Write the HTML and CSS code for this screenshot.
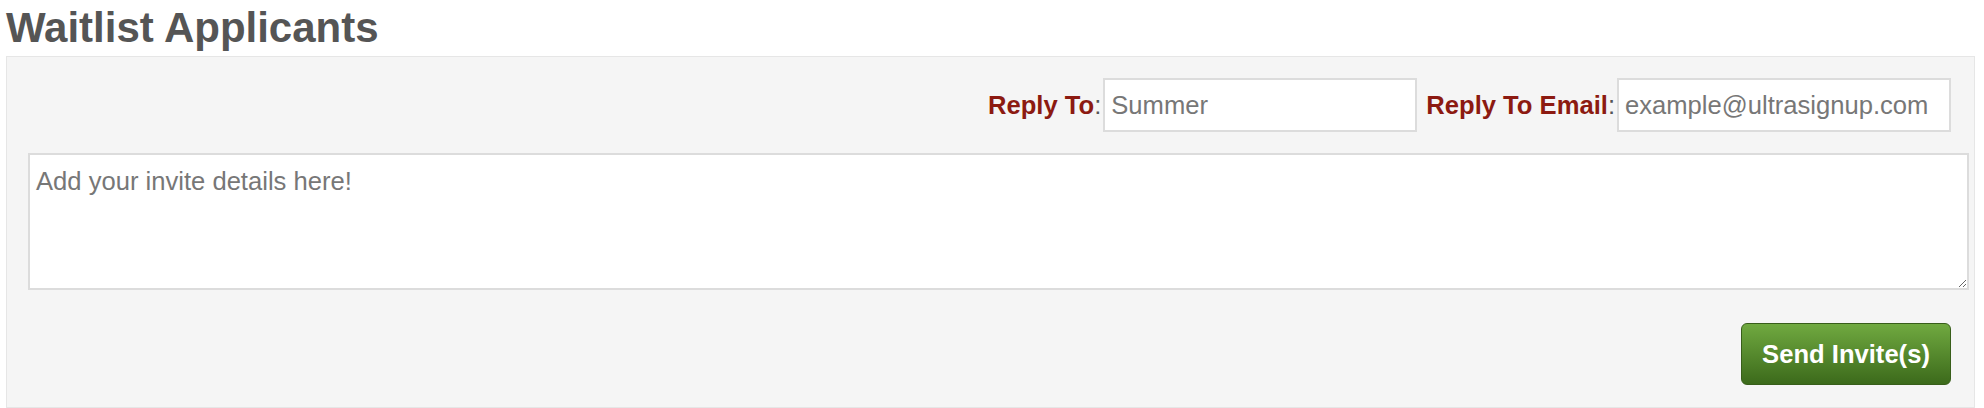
FILE: index.html
```html
<!DOCTYPE html>
<html lang="en">
<head>
    <meta charset="UTF-8">
    <meta name="viewport" content="width=device-width, initial-scale=1.0">
    <title>Waitlist Applicants</title>
    <link rel="stylesheet" href="styles.css">
</head>
<body>
    <h1 class="page-title">Waitlist Applicants</h1>
    <div class="invite-panel">
        <form id="inviteForm" class="invite-form">
            <div class="reply-row">
                <label for="reply_to"><strong>Reply To</strong>:</label>
                <input type="text" id="reply_to" name="reply_to" class="reply-name" placeholder="Summer">

                <label for="reply_email" class="email-label"><strong>Reply To Email</strong>:</label>
                <input type="email" id="reply_email" name="reply_email" class="reply-email" placeholder="example@ultrasignup.com">
            </div>

            <textarea id="invite_details" name="invite_details" class="invite-details" placeholder="Add your invite details here!"></textarea>

            <div class="actions">
                <button type="submit" class="send-button">Send Invite(s)</button>
            </div>
        </form>
    </div>
</body>
</html>
```

FILE: styles.css
```css
body {
    font-family: "Liberation Sans", Arial, Helvetica, sans-serif;
    margin: 0;
    padding: 4px 9px 0 6px;
    color: #555;
    background: #fff;
}
.page-title {
    margin: 0 0 5px 0;
    font-size: 42px;
    line-height: 47px;
    font-weight: bold;
    color: #555;
}
.invite-panel {
    background: #f5f5f5;
    border: 1px solid #e6e6e6;
    padding: 21px 23px 22px 21px;
}
.invite-form {
    display: flex;
    flex-direction: column;
}
.reply-row {
    display: flex;
    justify-content: flex-end;
    align-items: center;
}
.reply-row label {
    font-size: 25.6px;
    color: #555;
    margin-right: 2px;
}
.reply-row label strong {
    color: #8c1a11;
}
.email-label {
    margin-left: 9px;
}
.reply-row input {
    font-family: inherit;
    font-size: 25.6px;
    height: 54px;
    padding: 0 6px;
    border: 2px solid #dcdcdc;
    background: #fff;
    color: #555;
    box-sizing: border-box;
    outline: none;
}
.reply-row input::placeholder, .invite-details::placeholder {
    color: #777;
}
.reply-name {
    width: 314px;
}
.reply-email {
    width: 334px;
}
.invite-details {
    font-family: inherit;
    font-size: 25.6px;
    margin: 21px -18px 0 0;
    height: 137px;
    padding: 12px 6px 10px;
    border: 2px solid #dcdcdc;
    background: #fff;
    box-sizing: border-box;
    outline: none;
}
.actions {
    display: flex;
    justify-content: flex-end;
    margin-top: 33px;
}
.send-button {
    font-family: inherit;
    font-size: 25.6px;
    font-weight: bold;
    color: white;
    width: 210px;
    height: 62px;
    border: 1px solid #385e1a;
    border-radius: 6px;
    background: linear-gradient(to bottom, #70a940 0%, #3c6a1b 100%);
    cursor: pointer;
}
.send-button:hover {
    background: linear-gradient(to bottom, #5f9633 0%, #335c16 100%);
}
```
